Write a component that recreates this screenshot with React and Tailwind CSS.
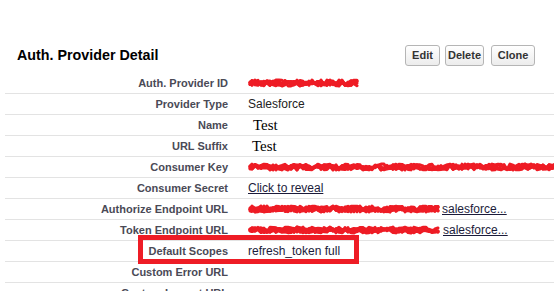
import React from 'react';

// deterministic scribble used to mask redacted values
const makeScribble = (width, seed) => {
    let s = seed;
    const rnd = () => {
        s = (s * 16807) % 2147483647;
        return s / 2147483647;
    };
    const paths = [];
    for (let pass = 0; pass < 5; pass++) {
        let d = `M 2 ${6 + rnd() * 3}`;
        for (let x = 4; x < width - 2; x += 3) {
            d += ` L ${x} ${4 + rnd() * 6}`;
        }
        paths.push(d);
    }
    return paths;
};

const Scribble = ({ width, seed = 7, height = 14 }) => (
    <svg width={width} height={height} viewBox={`0 0 ${width} 14`} className="shrink-0 block">
        {makeScribble(width, seed).map((d, i) => (
            <path key={i} d={d} fill="none" stroke="#ee1c25" strokeWidth="3" strokeLinejoin="round" strokeLinecap="round" />
        ))}
    </svg>
);

const rows = [
    { label: 'Auth. Provider ID', value: <Scribble width={112} seed={11} /> },
    { label: 'Provider Type', value: <span>Salesforce</span> },
    { label: 'Name', value: <span className="pl-[5px] text-[15px] font-['Liberation_Serif',serif] text-black">Test</span> },
    { label: 'URL Suffix', value: <span className="pl-[4px] text-[15px] font-['Liberation_Serif',serif] text-black">Test</span> },
    { label: 'Consumer Key', value: <Scribble width={310} seed={23} /> },
    { label: 'Consumer Secret', value: <span className="underline text-[#1b1b3a]">Click to reveal</span> },
    {
        label: 'Authorize Endpoint URL',
        value: (
            <span className="flex items-center underline text-[#1b1b3a]">
                <Scribble width={194} seed={41} />
                <span>salesforce...</span>
            </span>
        ),
    },
    {
        label: 'Token Endpoint URL',
        value: (
            <span className="flex items-center underline text-[#1b1b3a]">
                <Scribble width={195} seed={59} />
                <span>salesforce...</span>
            </span>
        ),
    },
    { label: 'Default Scopes', value: <span className="text-[#1b1b3a]">refresh_token full</span>, boxed: true },
    { label: 'Custom Error URL', value: null },
    { label: 'Custom Logout URL', value: null },
];

const Button = ({ children, className }) => (
    <button className={`h-[21px] rounded-[3px] border border-[#b5b5b5] bg-gradient-to-b from-white to-[#ececec] text-[11px] font-bold text-[#333] flex items-center justify-center ${className}`}>
        {children}
    </button>
);

const App = () => {
    return (
        <div className="w-[554px] h-[291px] overflow-hidden bg-white font-['Liberation_Sans',Arial,sans-serif]">
            <div className="h-[73px] pt-[45px] pl-[17px] pr-[19px]">
                <div className="h-[21px] flex items-center justify-between">
                    <h2 className="text-[14.3px] font-bold text-black">Auth. Provider Detail</h2>
                    <div className="flex">
                        <Button className="w-[35px]">Edit</Button>
                        <Button className="w-[39px] ml-[5px]">Delete</Button>
                        <Button className="w-[44px] ml-[7px]">Clone</Button>
                    </div>
                </div>
            </div>

            <div className="ml-[5px]">
                {rows.map((row) => (
                    <div key={row.label} className="relative h-[21px] border-b border-[#e3e3e3] flex items-center">
                        <div className="w-[223px] shrink-0 text-right text-[11px] font-bold text-[#4a4a56]">{row.label}</div>
                        <div className="pl-[20px] text-[12px] text-[#222] flex items-center whitespace-nowrap">{row.value}</div>
                        {row.boxed && (
                            <div className="absolute left-[133px] top-[-6px] w-[221px] h-[29px] border-[5px] border-[#ee1c25]" />
                        )}
                    </div>
                ))}
            </div>
        </div>
    );
};

export default App;
